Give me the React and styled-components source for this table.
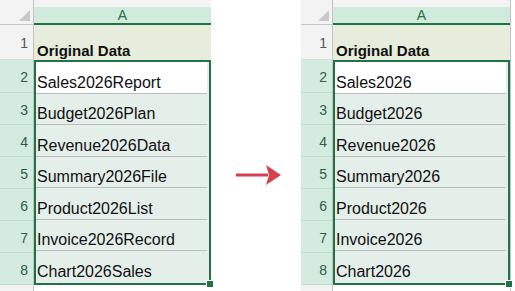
import React from 'react';
import styled, { createGlobalStyle } from 'styled-components';

const GlobalStyle = createGlobalStyle`
  html, body {
    margin: 0;
    padding: 0;
    background: #ffffff;
  }
  body {
    font-family: "Liberation Sans", Arial, sans-serif;
  }
`;

const Page = styled.div`
  display: flex;
  align-items: flex-start;
  width: 515px;
  height: 291px;
  overflow: hidden;
`;

const Sheet = styled.div`
  display: flex;
  height: 291px;
  margin-left: ${(p) => p.$offset}px;
`;

const RowHeaders = styled.div`
  display: flex;
  flex-direction: column;
  width: ${(p) => p.$width}px;
  border-right: 1px solid #c4c4c4;
  background: #f3f3f3;
`;

const Corner = styled.div`
  position: relative;
  height: 24px;
  flex: none;
  border-bottom: 1px solid #c4c4c4;
  background: #f3f3f3;

  &::after {
    content: '';
    position: absolute;
    right: 3px;
    bottom: 3px;
    width: 0;
    height: 0;
    border-left: 11px solid transparent;
    border-bottom: 11px solid #c9c9c9;
  }
`;

const RowNum = styled.div`
  display: flex;
  align-items: center;
  justify-content: flex-end;
  flex: none;
  height: ${(p) => p.$h}px;
  box-sizing: border-box;
  padding: 2px 5px 0 0;
  font-size: 14px;
  color: ${(p) => (p.$selected ? '#2e5e48' : '#555555')};
  background: ${(p) => (p.$selected ? '#d3ecdf' : '#f3f3f3')};
  border-bottom: 1px solid ${(p) => (p.$selected ? '#bfdccd' : '#dcdcdc')};
`;

const Filler = styled.div`
  flex: 1;
  background: #f3f3f3;
`;

const Column = styled.div`
  display: flex;
  flex-direction: column;
  width: 177px;
  border-right: 1px solid ${(p) => (p.$edge ? '#c4c4c4' : 'transparent')};
`;

const ColHeader = styled.div`
  display: flex;
  flex-direction: column;
  height: 25px;
  flex: none;
  background: #f3f3f3;
`;

const ColLabel = styled.div`
  margin-top: 7px;
  flex: 1;
  display: flex;
  align-items: center;
  justify-content: center;
  background: #d0eadb;
  border-bottom: 2px solid #217346;
  color: #217346;
  font-size: 14px;
`;

const TitleCell = styled.div`
  display: flex;
  align-items: flex-end;
  height: 35px;
  flex: none;
  box-sizing: border-box;
  padding: 0 0 1px 3px;
  background: #e6eddc;
  font-size: 15px;
  font-weight: bold;
  color: #111111;
`;

const Selection = styled.div`
  position: relative;
  display: flex;
  flex-direction: column;
  height: 225px;
  flex: none;
  box-sizing: border-box;
  border: 2px solid #217346;
  background: #e5efea;

  &::after {
    content: '';
    position: absolute;
    right: -5px;
    bottom: -5px;
    width: 6px;
    height: 6px;
    background: #217346;
    border: 1px solid #ffffff;
  }
`;

const DataCell = styled.div`
  display: flex;
  align-items: flex-end;
  flex: 1;
  box-sizing: border-box;
  padding: 0 0 1px 1px;
  margin: 0 2px 0 0;
  font-size: 16px;
  color: #111111;
  background: ${(p) => (p.$active ? '#ffffff' : 'transparent')};
  border-bottom: 1px solid ${(p) => (p.$last ? 'transparent' : '#bdbdbd')};
`;

const ArrowSlot = styled.div`
  display: flex;
  padding-top: 164px;
  margin-left: 24px;
`;

const before = [
  'Sales2026Report',
  'Budget2026Plan',
  'Revenue2026Data',
  'Summary2026File',
  'Product2026List',
  'Invoice2026Record',
  'Chart2026Sales',
];

const after = before.map((s) => s.replace(/(2026).*$/, '$1'));

const Spreadsheet = ({ values, headerWidth, offset, edge }) => (
  <Sheet $offset={offset}>
    <RowHeaders $width={headerWidth}>
      <Corner />
      <RowNum $h={35}>1</RowNum>
      {values.map((_, i) => (
        <RowNum key={i} $h={i === 0 ? 33 : 32} $selected>
          {i + 2}
        </RowNum>
      ))}
      <Filler />
    </RowHeaders>
    <Column $edge={edge}>
      <ColHeader>
        <ColLabel>A</ColLabel>
      </ColHeader>
      <TitleCell>Original Data</TitleCell>
      <Selection>
        {values.map((v, i) => (
          <DataCell key={v} $active={i === 0} $last={i === values.length - 1}>
            {v}
          </DataCell>
        ))}
      </Selection>
    </Column>
  </Sheet>
);

const Arrow = () => (
  <svg width="46" height="22" viewBox="0 0 46 22">
    <rect x="0" y="9.5" width="32" height="3" fill="#d6414f" />
    <polygon points="30,1 45,11 30,21 33,11" fill="#d6414f" />
  </svg>
);

const App = () => (
  <>
    <GlobalStyle />
    <Page>
      <Spreadsheet values={before} headerWidth={33} offset={0} />
      <ArrowSlot>
        <Arrow />
      </ArrowSlot>
      <Spreadsheet values={after} headerWidth={31} offset={19} edge />
    </Page>
  </>
);

export default App;
